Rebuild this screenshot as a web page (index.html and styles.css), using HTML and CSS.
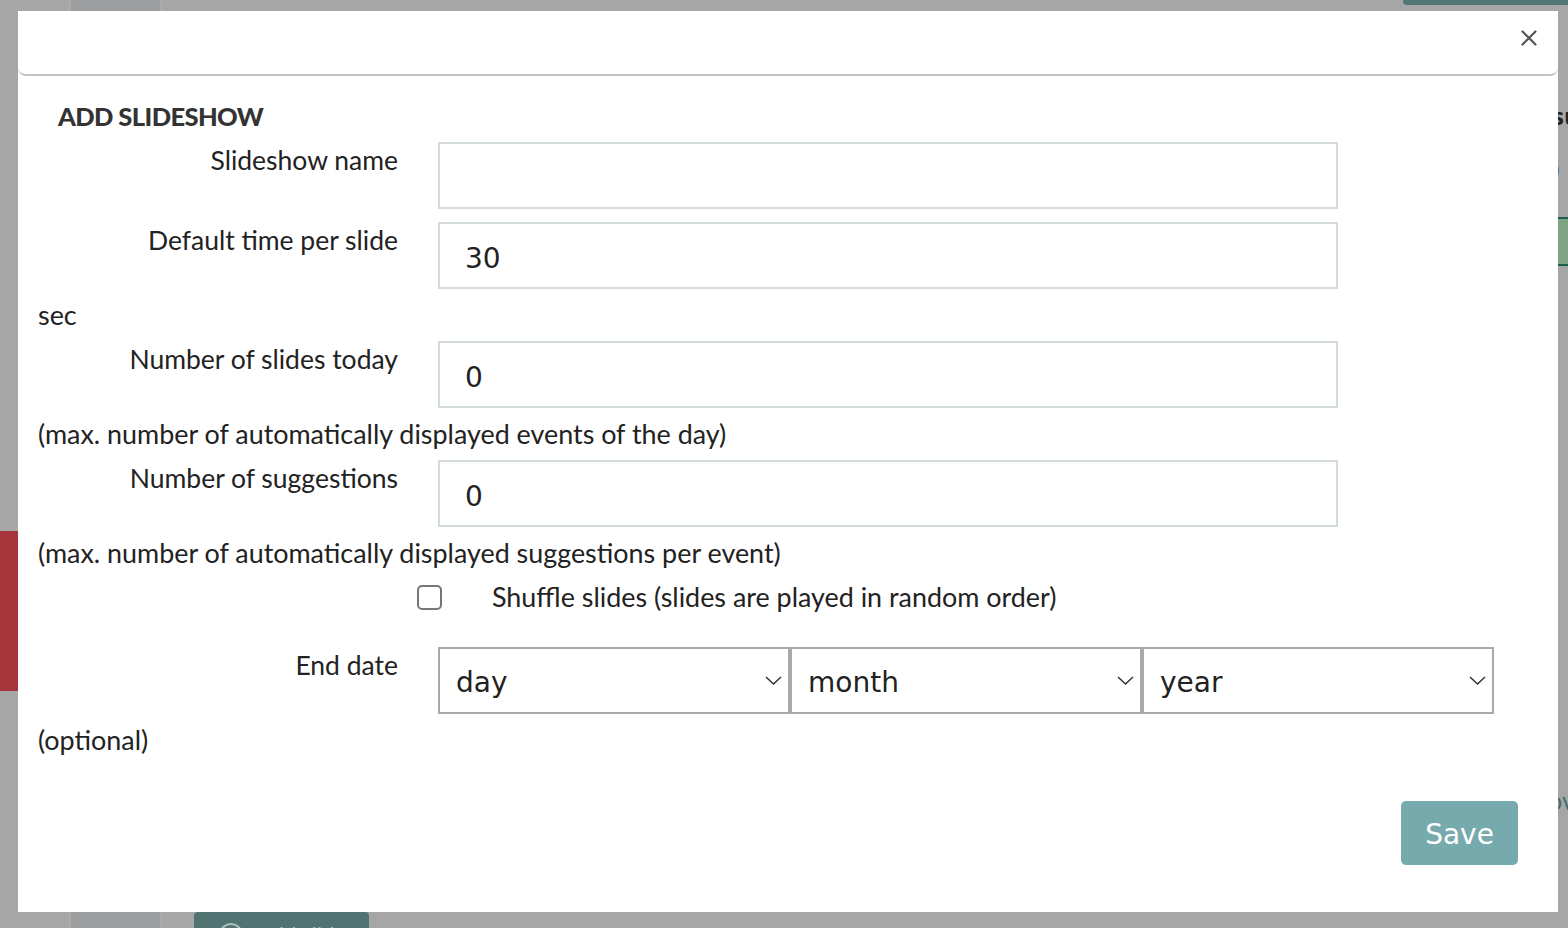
FILE: index.html
```html
<!DOCTYPE html>
<html lang="en">
<head>
<meta charset="utf-8">
<title>Add slideshow</title>
<link rel="stylesheet" href="styles.css">
</head>
<body>
<div class="page">
  <div class="edge"><div class="edge-red"></div></div>
  <div class="sidebar"></div>
  <div class="main">
    <div class="top-btn"></div>
    <div class="frag">
      <div class="frag-head">su</div>
      <div class="frag-num">0</div>
      <div class="frag-green"></div>
      <div class="frag-link">ov</div>
    </div>
    <div class="add-btn">
      <span class="add-circle"></span>
      <span class="add-text">Add slide</span>
    </div>
  </div>
</div>

<div class="modal">
  <div class="modal-header">
    <button class="close" aria-label="Close">
      <svg width="16" height="16" viewBox="0 0 16 16"><path d="M1.5 1.5 L14.5 14.5 M14.5 1.5 L1.5 14.5" stroke="#555" stroke-width="2.2" stroke-linecap="round" fill="none"/></svg>
    </button>
  </div>
  <div class="modal-body">
    <h2 class="title">ADD SLIDESHOW</h2>

    <div class="row">
      <label class="label">Slideshow name</label>
      <input class="field" type="text" value="">
    </div>
    <div class="row row-gap">
      <label class="label">Default time per slide</label>
      <input class="field" type="text" value="30">
    </div>
    <div class="note">sec</div>
    <div class="row">
      <label class="label">Number of slides today</label>
      <input class="field" type="text" value="0">
    </div>
    <div class="note">(max. number of automatically displayed events of the day)</div>
    <div class="row">
      <label class="label">Number of suggestions</label>
      <input class="field" type="text" value="0">
    </div>
    <div class="note">(max. number of automatically displayed suggestions per event)</div>

    <div class="check-row">
      <input class="check" type="checkbox">
      <span class="check-text">Shuffle slides (slides are played in random order)</span>
    </div>

    <div class="row date-row">
      <label class="label">End date</label>
      <div class="selects">
        <div class="sel">
          <select><option>day</option></select>
          <svg class="chev" width="17" height="9" viewBox="0 0 17 9"><path d="M1 1 L8.5 8 L16 1" stroke="#333" stroke-width="1.5" fill="none"/></svg>
        </div>
        <div class="sel">
          <select><option>month</option></select>
          <svg class="chev" width="17" height="9" viewBox="0 0 17 9"><path d="M1 1 L8.5 8 L16 1" stroke="#333" stroke-width="1.5" fill="none"/></svg>
        </div>
        <div class="sel">
          <select><option>year</option></select>
          <svg class="chev" width="17" height="9" viewBox="0 0 17 9"><path d="M1 1 L8.5 8 L16 1" stroke="#333" stroke-width="1.5" fill="none"/></svg>
        </div>
      </div>
    </div>
    <div class="note">(optional)</div>

    <div class="footer">
      <button class="save">Save</button>
    </div>
  </div>
</div>
</body>
</html>
```

FILE: styles.css
```css
html, body {
  margin: 0;
  padding: 0;
}
body {
  width: 1568px;
  height: 928px;
  overflow: hidden;
  background: #a6a6a6;
  font-family: Lato, "Liberation Sans", sans-serif;
}

/* dimmed page behind the dialog */
.page {
  display: flex;
  height: 928px;
}
.edge {
  width: 68px;
  flex: none;
}
.edge-red {
  width: 18px;
  height: 160px;
  margin-top: 531px;
  background: #a6363c;
}
.sidebar {
  width: 89px;
  flex: none;
  background: #9d9ea0;
  border-left: 3px solid #a9aaac;
  border-right: 3px solid #a9aaac;
}
.main {
  flex: 1;
  display: flex;
  flex-direction: column;
  padding-left: 31px;
}
.top-btn {
  align-self: flex-end;
  width: 165px;
  height: 5px;
  background: #527575;
  border-radius: 0 0 0 4px;
}
.frag {
  align-self: flex-end;
  width: 14px;
  padding-top: 96px;
  font-family: "Open Sans", sans-serif;
  overflow: hidden;
}
.frag-head {
  font-weight: bold;
  font-size: 24px;
  color: #222;
  line-height: 30px;
  margin-left: -2px;
}
.frag-num {
  font-size: 24px;
  color: #333;
  line-height: 30px;
  margin-top: 24px;
  margin-left: -8px;
}
.frag-green {
  height: 45px;
  margin-top: 32px;
  background: #80a383;
  border-top: 2px solid #1e5e4e;
  border-bottom: 2px solid #1e5e4e;
}
.frag-link {
  margin-top: 518px;
  font-size: 24px;
  color: #3f6a6a;
  margin-left: -6px;
}
.add-btn {
  margin-top: auto;
  width: 175px;
  height: 16px;
  background: #517473;
  border-radius: 4px 4px 0 0;
  overflow: hidden;
  display: flex;
  align-items: flex-start;
  padding-top: 11px;
  box-sizing: border-box;
}
.add-circle {
  width: 20px;
  height: 20px;
  margin-left: 25px;
  border: 2px solid #a8bcbb;
  border-radius: 50%;
  flex: none;
}
.add-text {
  margin-left: 14px;
  margin-top: 2px;
  color: #a8bcbb;
  font-size: 22px;
  line-height: 20px;
}

/* dialog */
.modal {
  position: fixed;
  left: 18px;
  top: 11px;
  width: 1540px;
  height: 901px;
  background: #fff;
}
.modal-header {
  height: 63px;
  border-bottom: 2px solid #c3c3c3;
  border-radius: 0 0 8px 8px;
  display: flex;
  align-items: center;
  justify-content: flex-end;
  padding-right: 21px;
}
.close {
  border: none;
  background: none;
  padding: 0;
  width: 16px;
  height: 16px;
  display: flex;
  margin-top: -10px;
}
.modal-body {
  padding: 0 20px;
}
.title {
  margin: 22px 0 8px 20px;
  font-size: 25.5px;
  line-height: 36px;
  font-weight: 900;
  color: #333;
  letter-spacing: -0.6px;
}
.row {
  display: flex;
  align-items: flex-start;
}
.row-gap {
  margin-top: 13px;
}
.label {
  width: 400px;
  flex: none;
  box-sizing: border-box;
  padding-right: 40px;
  text-align: right;
  font-size: 26.5px;
  line-height: 36px;
  color: #222;
}
.field {
  width: 900px;
  height: 67px;
  box-sizing: border-box;
  border: 2px solid #d3dbdb;
  padding: 5px 25px 0;
  margin: 0;
  font-family: "DejaVu Sans", Verdana, sans-serif;
  font-size: 28px;
  color: #222;
  background: #fff;
  outline: none;
}
.note {
  margin: 8px 0;
  font-size: 26.9px;
  line-height: 36px;
  color: #222;
}
.check-row {
  display: flex;
  align-items: center;
  height: 36px;
  padding-left: 379px;
}
.check {
  appearance: none;
  -webkit-appearance: none;
  width: 25px;
  height: 25px;
  margin: 0;
  box-sizing: border-box;
  border: 2px solid #767676;
  border-radius: 5px;
  background: #fff;
  flex: none;
}
.check-text {
  margin-left: 50px;
  font-size: 26.9px;
  line-height: 36px;
  color: #222;
}
.date-row {
  margin-top: 32px;
}
.selects {
  display: flex;
}
.sel {
  position: relative;
  width: 352px;
  height: 67px;
}
.sel select {
  appearance: none;
  -webkit-appearance: none;
  width: 100%;
  height: 100%;
  box-sizing: border-box;
  border: 2px solid #a9a9a9;
  border-radius: 0;
  padding: 4px 16px 0;
  margin: 0;
  font-family: "DejaVu Sans", Verdana, sans-serif;
  font-size: 28px;
  color: #222;
  background: #fff;
  outline: none;
}
.chev {
  position: absolute;
  right: 8px;
  top: 29px;
  pointer-events: none;
}
.footer {
  display: flex;
  justify-content: flex-end;
  padding-right: 20px;
  margin-top: 43px;
}
.save {
  width: 117px;
  height: 64px;
  border: none;
  border-radius: 5px;
  background: #77aaad;
  color: #fff;
  font-family: "DejaVu Sans", Verdana, sans-serif;
  font-size: 28px;
  padding: 2px 0 0;
}
```
